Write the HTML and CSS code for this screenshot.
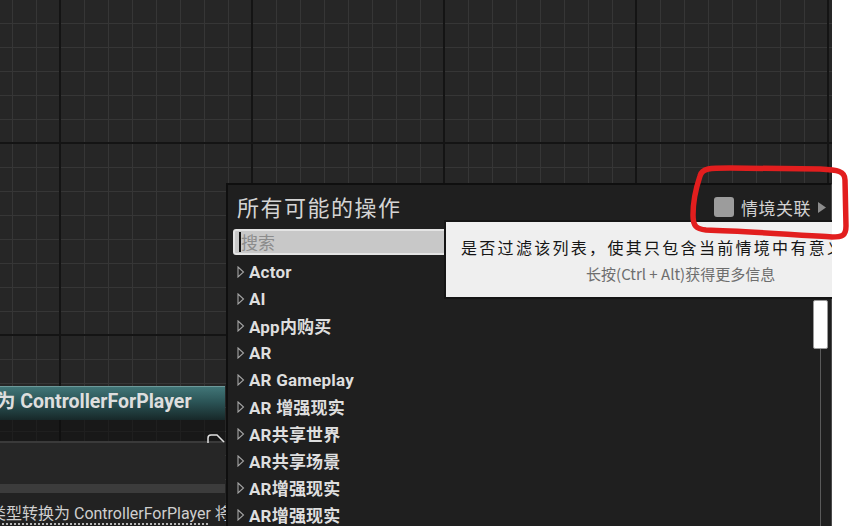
FILE: index.html
```html
<!DOCTYPE html>
<html lang="zh-CN">
<head>
<meta charset="utf-8">
<title>所有可能的操作</title>
<link rel="stylesheet" href="styles.css">
</head>
<body>
<div class="stage">
  <div class="canvas">
    <div class="node">
      <div class="node-head"><span class="node-title">为 ControllerForPlayer</span></div>
      <div class="node-body">
        <svg class="pin" width="20" height="10" viewBox="0 0 20 10"><path d="M2 10 L2 5 Q2 2 5 2 L11 2 L18 9" fill="none" stroke="#e0e0e0" stroke-width="1.5"/></svg>
      </div>
      <div class="node-rule"></div>
      <div class="node-panel"></div>
      <div class="node-band"></div>
      <div class="node-desc"><span class="desc-link"><span class="cjk">类型转换为</span> ControllerForPlayer</span> <span class="cjk">将</span></div>
    </div>

    <div class="menu">
      <div class="menu-head">
        <span class="menu-title">所有可能的操作</span>
        <div class="context">
          <span class="checkbox"></span>
          <span class="context-label">情境关联</span>
          <svg class="context-arrow" width="8" height="11" viewBox="0 0 8 11"><path d="M0 0 L8 5.5 L0 11 Z" fill="#8c8c8c"/></svg>
        </div>
      </div>
      <div class="search">
        <span class="caret"></span>
        <span class="placeholder">搜索</span>
      </div>
      <div class="menu-body">
        <div class="list">
          <div class="row"><svg class="tri" width="8" height="12" viewBox="0 0 8 12"><path d="M1 1 L6.5 6 L1 11 Z" fill="none" stroke="#a4a4a4" stroke-width="1.1"/></svg><span class="row-label">Actor</span></div>
          <div class="row"><svg class="tri" width="8" height="12" viewBox="0 0 8 12"><path d="M1 1 L6.5 6 L1 11 Z" fill="none" stroke="#a4a4a4" stroke-width="1.1"/></svg><span class="row-label">AI</span></div>
          <div class="row"><svg class="tri" width="8" height="12" viewBox="0 0 8 12"><path d="M1 1 L6.5 6 L1 11 Z" fill="none" stroke="#a4a4a4" stroke-width="1.1"/></svg><span class="row-label">App内购买</span></div>
          <div class="row"><svg class="tri" width="8" height="12" viewBox="0 0 8 12"><path d="M1 1 L6.5 6 L1 11 Z" fill="none" stroke="#a4a4a4" stroke-width="1.1"/></svg><span class="row-label">AR</span></div>
          <div class="row"><svg class="tri" width="8" height="12" viewBox="0 0 8 12"><path d="M1 1 L6.5 6 L1 11 Z" fill="none" stroke="#a4a4a4" stroke-width="1.1"/></svg><span class="row-label">AR Gameplay</span></div>
          <div class="row"><svg class="tri" width="8" height="12" viewBox="0 0 8 12"><path d="M1 1 L6.5 6 L1 11 Z" fill="none" stroke="#a4a4a4" stroke-width="1.1"/></svg><span class="row-label">AR 增强现实</span></div>
          <div class="row"><svg class="tri" width="8" height="12" viewBox="0 0 8 12"><path d="M1 1 L6.5 6 L1 11 Z" fill="none" stroke="#a4a4a4" stroke-width="1.1"/></svg><span class="row-label">AR共享世界</span></div>
          <div class="row"><svg class="tri" width="8" height="12" viewBox="0 0 8 12"><path d="M1 1 L6.5 6 L1 11 Z" fill="none" stroke="#a4a4a4" stroke-width="1.1"/></svg><span class="row-label">AR共享场景</span></div>
          <div class="row"><svg class="tri" width="8" height="12" viewBox="0 0 8 12"><path d="M1 1 L6.5 6 L1 11 Z" fill="none" stroke="#a4a4a4" stroke-width="1.1"/></svg><span class="row-label">AR增强现实</span></div>
          <div class="row"><svg class="tri" width="8" height="12" viewBox="0 0 8 12"><path d="M1 1 L6.5 6 L1 11 Z" fill="none" stroke="#a4a4a4" stroke-width="1.1"/></svg><span class="row-label">AR增强现实</span></div>
        </div>
        <div class="scroll">
          <div class="scroll-thumb"></div>
          <div class="scroll-track"></div>
        </div>
      </div>
    </div>

    <div class="tooltip">
      <div class="tip-main">是否过滤该列表，使其只包含当前情境中有意义的操作</div>
      <div class="tip-hint">长按(Ctrl + Alt)获得更多信息</div>
    </div>
  </div>

  <svg class="annotation" width="852" height="526" viewBox="0 0 852 526">
    <path d="M700 176 C702 168 710 168 730 168 L820 169 C838 170 845 171 845 180 L846 226 C846 236 842 237 832 237 C800 235 740 231 706 230 C696 229 693 226 693 215 C693 200 696 188 700 176 Z" fill="none" stroke="#e21e1e" stroke-width="5.5" stroke-linejoin="round"/>
  </svg>
</div>
</body>
</html>
```

FILE: styles.css
```css
* { box-sizing: border-box; }

body {
  margin: 0;
  background: #ffffff;
  font-family: Roboto, "Noto Sans CJK SC", sans-serif;
}

.stage {
  position: relative;
  width: 852px;
  height: 526px;
  overflow: hidden;
}

.canvas {
  position: relative;
  width: 832px;
  height: 526px;
  overflow: hidden;
  background-color: #262626;
  background-image:
    linear-gradient(90deg, #141414 2px, transparent 2px),
    linear-gradient(180deg, #141414 2px, transparent 2px),
    linear-gradient(90deg, #363636 1px, transparent 1px),
    linear-gradient(180deg, #363636 1px, transparent 1px);
  background-size: 192px 192px, 192px 192px, 24px 24px, 24px 24px;
  background-position: 59px 0, 0 142px, 12px 0, 0 23px;
}

/* ---------- graph node ---------- */
.node {
  position: absolute;
  left: -30px;
  top: 386px;
  width: 255px;
}

.node-head {
  height: 34px;
  border-top: 1px solid #6e9a9b;
  background: linear-gradient(180deg, #417577 0%, #2b5456 45%, #172829 100%);
  display: flex;
  align-items: center;
  padding-left: 26px;
  white-space: nowrap;
}

.node-title {
  font-weight: 700;
  font-size: 19.5px;
  color: #dedede;
  line-height: 30px;
  margin-top: -3px;
}

.node-body {
  position: relative;
  height: 21px;
  background: rgba(12, 12, 12, 0.55);
}

.pin {
  position: absolute;
  left: 236px;
  top: 13px;
}

.node-rule { height: 2px; background: #3a3a3a; }
.node-panel { height: 41px; background: #262626; }
.node-band { height: 9px; background: #3c3c3c; }

.node-desc {
  height: 40px;
  background: #222222;
  padding: 6px 0 0 20px;
  font-size: 16px;
  line-height: 26px;
  color: #cfcfcf;
  white-space: nowrap;
}

.desc-link {
  text-decoration: underline dotted #dddddd;
  text-underline-offset: 5px;
}

.cjk {
  font-family: "Noto Sans CJK SC", sans-serif;
  font-size: 16px;
}

/* ---------- action menu ---------- */
.menu {
  position: absolute;
  left: 226px;
  top: 183px;
  width: 606px;
  height: 360px;
  background: #1f1f1f;
  border: 2px solid #0f0f0f;
  border-right: 1px solid #4a4a4a;
  display: flex;
  flex-direction: column;
}

.menu-head {
  height: 44px;
  flex: none;
  display: flex;
  align-items: center;
  justify-content: space-between;
  padding: 0 5px 0 9px;
}

.menu-title {
  font-family: "Noto Sans CJK SC", sans-serif;
  font-size: 22px;
  letter-spacing: 1.5px;
  color: #d4d4d4;
  margin-top: -2px;
}

.context {
  display: flex;
  align-items: center;
}

.checkbox {
  width: 20px;
  height: 20px;
  border-radius: 3px;
  background: #9c9c9c;
  margin-right: 7px;
}

.context-label {
  font-family: "Noto Sans CJK SC", sans-serif;
  font-size: 17px;
  letter-spacing: 0.5px;
  color: #d2d2d2;
  margin-right: 7px;
}

.search {
  flex: none;
  height: 26px;
  margin: 0 18px 0 5px;
  background: #c8c8c8;
  border: 2px solid #e4e4e4;
  border-radius: 3px;
  display: flex;
  align-items: center;
}

.caret {
  width: 2px;
  height: 20px;
  background: #111111;
  margin-left: 4px;
}

.placeholder {
  font-family: "Noto Sans CJK SC", sans-serif;
  font-size: 17px;
  color: #8c8c8c;
  line-height: 20px;
}

.menu-body {
  flex: 1;
  display: flex;
  margin-top: 3px;
  min-height: 0;
}

.list {
  flex: 1;
}

.row {
  height: 27px;
  display: flex;
  align-items: center;
  padding-left: 9px;
  gap: 4px;
  white-space: nowrap;
}

.tri { flex: none; }

.row-label {
  font-weight: 700;
  font-size: 17px;
  letter-spacing: 0.2px;
  color: #dedede;
}

.scroll {
  width: 18px;
  padding-right: 3px;
  display: flex;
  flex-direction: column;
  align-items: center;
}

.scroll-thumb {
  width: 15px;
  height: 49px;
  margin-top: 42px;
  background: #ffffff;
  border: 1px solid #9a9a9a;
  border-radius: 2px;
}

.scroll-track {
  flex: 1;
  width: 1px;
  background: #5a5a5a;
}

/* ---------- tooltip ---------- */
.tooltip {
  position: absolute;
  left: 444px;
  top: 220px;
  background: #efefef;
  border: 2px solid #151515;
  padding: 13px 16px 11px 15px;
  white-space: nowrap;
  font-family: "Noto Sans CJK SC", sans-serif;
}

.tip-main {
  font-size: 16px;
  line-height: 24px;
  letter-spacing: 2.3px;
  color: #151515;
}

.tip-hint {
  margin-top: 3px;
  font-size: 15px;
  line-height: 24px;
  text-align: center;
  color: #6e6e6e;
}

/* ---------- annotation ---------- */
.annotation {
  position: absolute;
  left: 0;
  top: 0;
  pointer-events: none;
}
```
